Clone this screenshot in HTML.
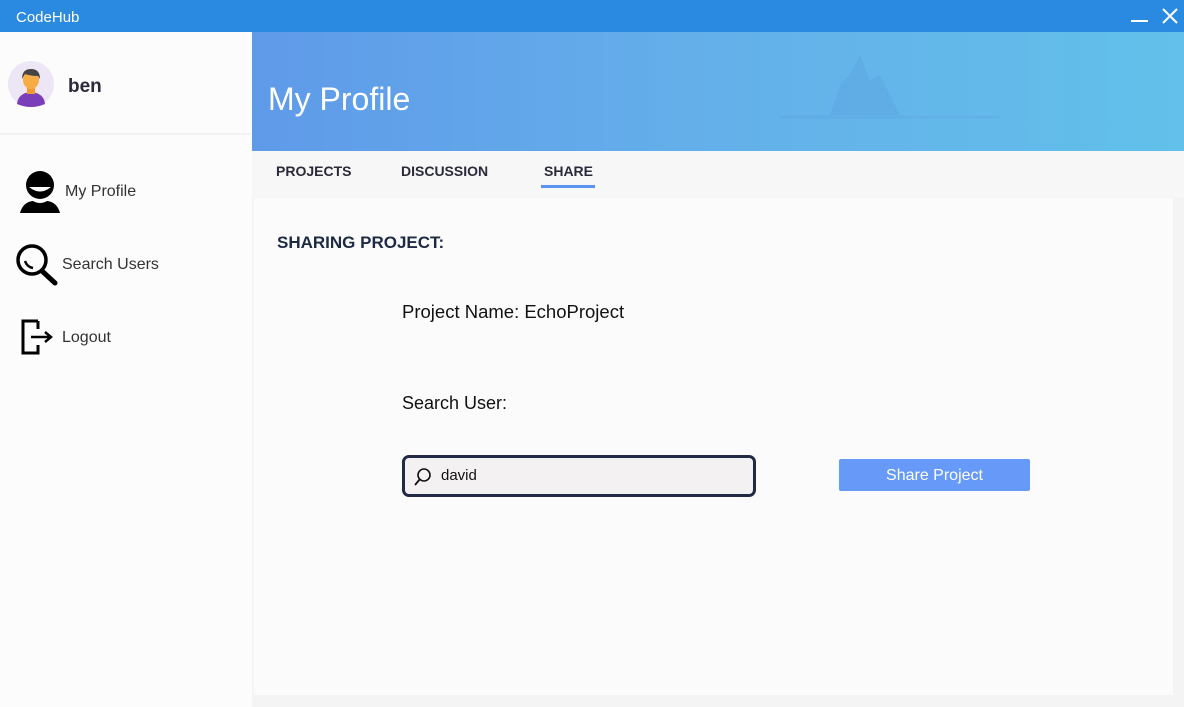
<!DOCTYPE html>
<html><head><style>
*{margin:0;padding:0;box-sizing:border-box}
body{width:1184px;height:707px;overflow:hidden;background:#f4f4f4;font-family:"Liberation Sans",sans-serif;position:relative}
.abs{position:absolute}
</style></head><body>
<div class="abs" style="left:0;top:0;width:1184px;height:32px;background:#2a8ae2"></div>
<div class="abs" style="left:16px;top:9px;color:#fff;font-size:15px">CodeHub</div>
<div class="abs" style="left:1131px;top:20px;width:17px;height:2px;background:#fff"></div>
<svg class="abs" style="left:1161px;top:7px" width="18" height="18"><path d="M2 2L16 16M16 2L2 16" stroke="#fff" stroke-width="2"/></svg>

<div class="abs" style="left:0;top:32px;width:252px;height:675px;background:#fcfcfc"></div>
<div class="abs" style="left:0;top:133px;width:250px;height:2px;background:#f3f3f3"></div>
<svg class="abs" style="left:8px;top:61px" width="46" height="46" viewBox="0 0 46 46">
<circle cx="23" cy="23" r="23" fill="#ece6f5"/>
<path d="M9 43Q10 32 23 31Q36 32 37 43Q30 46 23 46Q16 46 9 43Z" fill="#7a3fb8"/>
<rect x="19" y="26" width="8" height="7" fill="#f09a30"/>
<ellipse cx="23" cy="19" rx="8" ry="9" fill="#f7ad45"/>
<path d="M14 18Q14 8 23 8Q32 8 32 18L30 15Q23 15 17 13Z" fill="#444"/>
</svg>
<div class="abs" style="left:68px;top:76px;font-size:19px;font-weight:bold;color:#2a2a3a">ben</div>

<svg class="abs" style="left:19px;top:170px" width="42" height="44" viewBox="0 0 42 44">
<circle cx="21" cy="15" r="14" fill="#000"/>
<path d="M10 17Q21 26 32 17Z" fill="#fff"/>
<path d="M1 43Q4 32 14 31Q21 35 28 31Q38 32 41 43Z" fill="#000"/>
</svg>
<div class="abs" style="left:65px;top:183px;font-size:16px;color:#333">My Profile</div>
<svg class="abs" style="left:15px;top:243px" width="45" height="44" viewBox="0 0 45 44">
<circle cx="17" cy="17" r="14" fill="none" stroke="#000" stroke-width="3.5"/>
<path d="M10 18Q12 24 18 25" fill="none" stroke="#000" stroke-width="2.5"/>
<path d="M27 28L40 40" stroke="#000" stroke-width="5" stroke-linecap="round"/>
</svg>
<div class="abs" style="left:62px;top:256px;font-size:16px;color:#333">Search Users</div>
<svg class="abs" style="left:21px;top:319px" width="34" height="36" viewBox="0 0 34 36">
<path d="M17 2H2V34H17V26M17 10V2" fill="none" stroke="#000" stroke-width="3"/>
<path d="M10 18H29M24 13L30 18L24 23" fill="none" stroke="#000" stroke-width="2.5"/>
</svg>
<div class="abs" style="left:62px;top:329px;font-size:16px;color:#333">Logout</div>

<div class="abs" style="left:252px;top:32px;width:932px;height:119px;background:linear-gradient(90deg,#5f9ae9,#64b0ea 50%,#62c0ea)"></div>
<svg class="abs" style="left:700px;top:45px" width="300" height="80" viewBox="0 0 300 80">
<path d="M130 70L140 40L150 30L160 10L170 35L180 30L190 50L200 70Z" fill="#5d9fe0" opacity=".35"/>
<path d="M80 72H300" stroke="#5d9fe0" stroke-width="3" opacity=".3"/>
</svg>
<div class="abs" style="left:268px;top:81px;color:#fff;font-size:32px">My Profile</div>
<div class="abs" style="left:252px;top:151px;width:932px;height:46px;background:#f7f7f7"></div>
<div class="abs" style="left:276px;top:163px;font-size:14px;font-weight:bold;color:#2a2a3a">PROJECTS</div>
<div class="abs" style="left:401px;top:163px;font-size:14px;font-weight:bold;color:#2a2a3a">DISCUSSION</div>
<div class="abs" style="left:544px;top:163px;font-size:14px;font-weight:bold;color:#2a2a3a">SHARE</div>
<div class="abs" style="left:541px;top:185px;width:54px;height:3px;background:#5b93f0"></div>

<div class="abs" style="left:254px;top:198px;width:919px;height:497px;background:#fbfbfb"></div>
<div class="abs" style="left:277px;top:233px;font-size:17px;font-weight:bold;color:#1e2a44">SHARING PROJECT:</div>
<div class="abs" style="left:402px;top:301px;font-size:18.5px;color:#111">Project Name: EchoProject</div>
<div class="abs" style="left:402px;top:393px;font-size:18px;color:#111">Search User:</div>
<div class="abs" style="left:402px;top:455px;width:354px;height:42px;border:3px solid #232a45;border-radius:7px;background:#f4f1f2"></div>
<svg class="abs" style="left:412px;top:466px" width="22" height="22" viewBox="0 0 22 22">
<circle cx="12" cy="9" r="6" fill="none" stroke="#111" stroke-width="1.6"/>
<path d="M8 13L3 19" stroke="#111" stroke-width="1.8"/>
</svg>
<div class="abs" style="left:441px;top:467px;font-size:15px;color:#111">david</div>
<div class="abs" style="left:839px;top:459px;width:191px;height:32px;background:#6699f8;border-radius:2px;color:#fff;font-size:16px;text-align:center;line-height:34px">Share Project</div>
</body></html>
